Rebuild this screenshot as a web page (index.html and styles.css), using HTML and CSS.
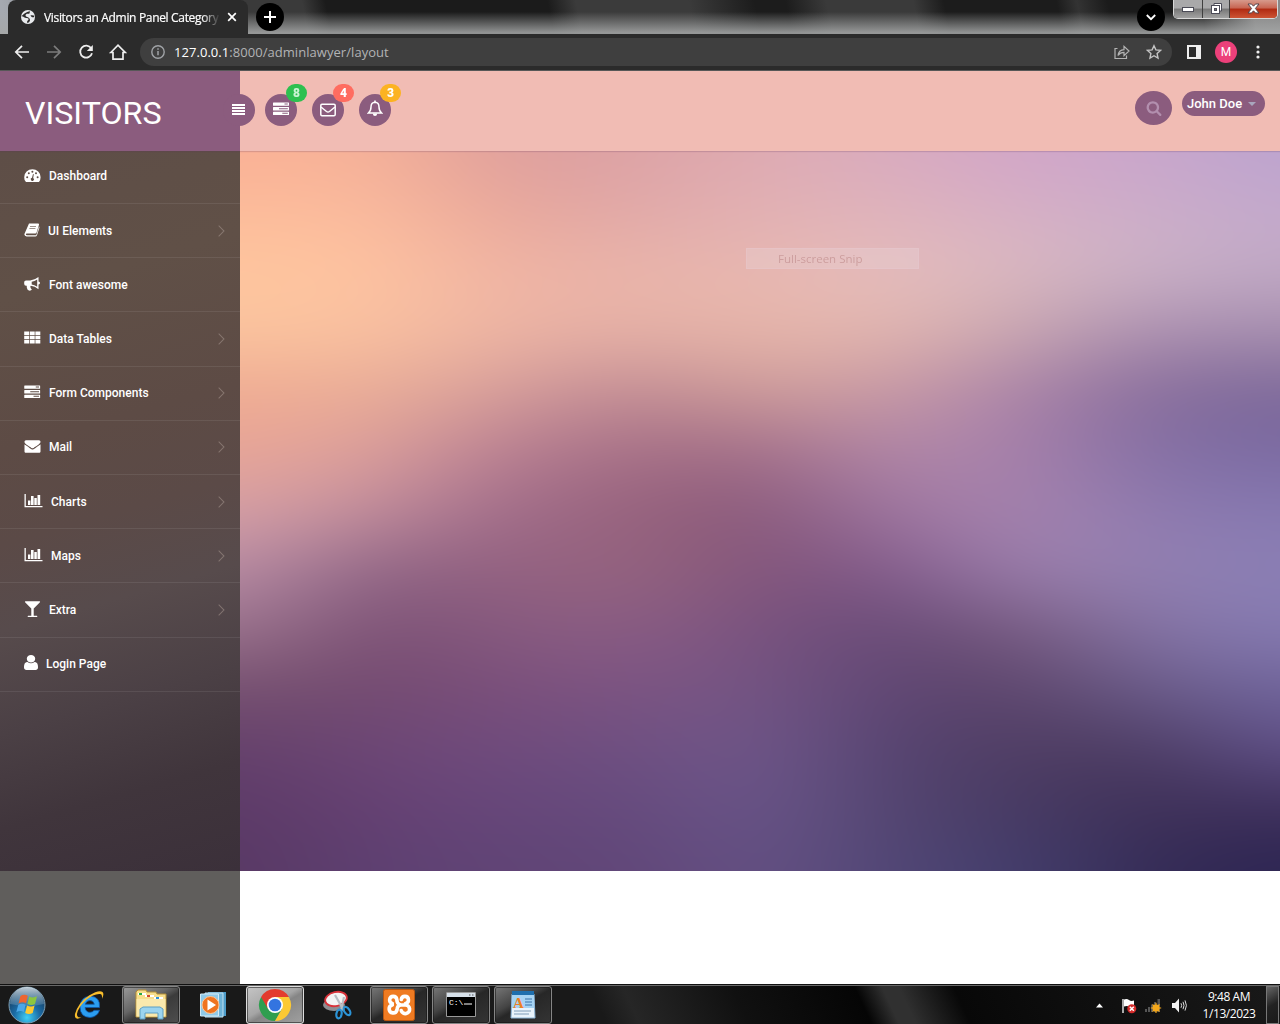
FILE: index.html
```html
<!DOCTYPE html>
<html lang="en">
<head>
<meta charset="utf-8">
<title>Visitors an Admin Panel Category</title>
<link rel="stylesheet" href="styles.css">
</head>
<body>
<svg class="defs" width="0" height="0">
  <symbol id="tasks" viewBox="0 0 16 16"><path fill-rule="evenodd" d="M.5 1.500h15q.5 0 .5.500v2.300q0 .5-.5.5H.5Q0 4.800 0 4.300V2q0-.5.500-.5zM11.500 2.600v1h3.300v-1zM.5 6.100h15q.5 0 .5.500v2.300q0 .5-.5.500H.5Q0 9.400 0 8.900V6.600q0-.5.500-.5zM6 7.200v1h8.800v-1zM.5 10.700h15q.5 0 .5.500v2.300q0 .5-.5.500H.5Q0 14 0 13.500v-2.300q0-.5.500-.5zM9.300 11.800v1h5.500v-1z"/></symbol>
  <symbol id="chart" viewBox="0 0 18 14"><path d="M0 0h1.300v12h16.700v1.300H0zM3.500 6.500h2.400V11H3.500zM6.500 2h2.600v9H6.500zM9.800 4h2.500v7H9.800zM13 1h2.700v10H13z"/></symbol>
</svg>

<header class="tabstrip">
  <div class="tab">
    <svg class="globe" viewBox="0 0 16 16"><circle cx="8" cy="8" r="7" fill="#e8eaed"/><path d="M1.500 7.300C4 7.500 4.500 9.200 6.500 9S9.300 10.300 8 11.300 7 13 7.500 14.300C9 13.500 9.800 12.500 10 11.300 10.200 9.500 8.500 8.300 6.500 7.700 4.500 6.500 6 4.500 8 4.800S9.500 3.500 10 2.200C8.500 2.200 6 3.500 4.500 4.500S2.500 6.300 1.500 7.300zM10.500 6.500C11.500 6 12.500 6.800 14 6.400L14.200 8C13 8.800 11.500 8.300 10.500 6.500z" fill="#2b2b2b"/></svg>
    <span class="tab-title">Visitors an Admin Panel Category</span>
    <svg class="tab-close" viewBox="0 0 10 10"><path d="M1.200 1.200l7.600 7.600M8.800 1.200L1.200 8.800" stroke="#fff" stroke-width="1.700"/></svg>
  </div>
  <div class="round new-tab"><svg width="14" height="14" viewBox="0 0 14 14"><path d="M7 1v12M1 7h12" stroke="#fff" stroke-width="2"/></svg></div>
  <div class="round tab-search"><svg width="10" height="10" viewBox="0 0 10 10"><path d="M.8 3L5 7.200 9.200 3" fill="none" stroke="#fff" stroke-width="1.800"/></svg></div>
  <div class="winctl">
    <span class="wmin"><svg width="12" height="6" viewBox="0 0 12 6"><rect x=".5" y=".5" width="11" height="4" fill="#fff" stroke="#4b4b57"/></svg></span>
    <span class="wmax"><svg width="13" height="13" viewBox="0 0 13 13"><path d="M4 1.500h7.500V9H4z" fill="#fff" stroke="#4b4b57"/><rect x="1.500" y="3.500" width="8" height="8" fill="#fff" stroke="#4b4b57"/><rect x="4.500" y="6.500" width="2" height="2" fill="#777" stroke="#4b4b57"/></svg></span>
    <span class="wclose"><svg width="13" height="11" viewBox="0 0 13 11"><path d="M1 1h3.500l2 2.200L8.500 1H12L8.400 5.500 12 10H8.500l-2-2.200L4.500 10H1l3.600-4.500z" fill="#fff" stroke="#54444c"/></svg></span>
  </div>
</header>

<div class="toolbar">
  <svg class="nav" viewBox="0 0 16 16"><path d="M15 8H2M8 1.800L1.800 8 8 14.200" fill="none" stroke="#eee" stroke-width="1.700"/></svg>
  <svg class="nav" viewBox="0 0 16 16"><path d="M1 8h13M8 1.800L14.200 8 8 14.200" fill="none" stroke="#7c7c7c" stroke-width="1.700"/></svg>
  <svg class="nav" viewBox="0 0 16 16"><path d="M13.200 4.300A6 6 0 1 0 14 9.300" fill="none" stroke="#eee" stroke-width="1.800"/><path d="M14.800 1v6H8.800z" fill="#eee"/></svg>
  <svg class="nav home" viewBox="0 0 18 18"><path d="M1.800 9.500L9 2.200l7.200 7.300H14v6.700H4V9.500z" fill="none" stroke="#eee" stroke-width="1.700"/></svg>
  <div class="address">
    <svg width="14" height="14" viewBox="0 0 14 14"><circle cx="7" cy="7" r="6.200" fill="none" stroke="#a0a3a7" stroke-width="1.400"/><path d="M7 6v4.300M7 3.300v1.500" stroke="#a0a3a7" stroke-width="1.500"/></svg>
    <span class="url"><b>127.0.0.1</b>:8000/adminlawyer/layout</span>
    <svg class="share" width="16" height="16" viewBox="0 0 16 16"><path d="M3.500 4.500H1v10h11.500v-3M4 11.500C4.500 7.500 6.500 5.800 10 5.600V2.300L15 7l-5 4.600V8.400C7.500 8.400 5.500 9.300 4 11.500z" fill="none" stroke="#b4b4b4" stroke-width="1.200"/></svg>
    <svg class="star" width="16" height="16" viewBox="0 0 16 16"><path d="M8 1.700l1.900 4.200 4.600.5-3.400 3.100.9 4.500L8 11.700 4 14l.9-4.500L1.500 6.400l4.600-.5z" fill="none" stroke="#c4c4c4" stroke-width="1.400"/></svg>
  </div>
  <svg class="panel" width="14" height="14" viewBox="0 0 14 14"><path d="M0 0h14v14H0z" fill="#eee"/><path d="M2 2h7v10H2z" fill="#2b2b2b"/></svg>
  <div class="avatar">M</div>
  <svg class="dots" width="4" height="14" viewBox="0 0 4 14" fill="#eee"><circle cx="2" cy="2" r="1.600"/><circle cx="2" cy="7" r="1.600"/><circle cx="2" cy="12" r="1.600"/></svg>
</div>

<main class="page">
  <div class="site-header">
    <div class="brand">VISITORS</div>
    <div class="toggle"><svg width="13" height="12" viewBox="0 0 13 12" fill="#fff"><path d="M0 0h13v2H0zM0 3h13v2H0zM0 6h13v2H0zM0 9h13v2H0z"/></svg></div>
    <div class="notices">
      <div class="notice"><svg class="lift" width="16" height="16" fill="#fff"><use href="#tasks"/></svg><i class="badge green">8</i></div>
      <div class="notice"><svg width="16" height="14" viewBox="0 0 16 14"><rect x=".8" y="1.200" width="14.400" height="11.600" rx="1.200" fill="none" stroke="#fff" stroke-width="1.500"/><path d="M1 4l5.500 4.500q1.500 1.100 3 0L15 4" fill="none" stroke="#fff" stroke-width="1.500"/></svg><i class="badge red">4</i></div>
      <div class="notice"><svg class="lift" width="16" height="17" viewBox="0 0 16 17"><path d="M8 2.200C4.800 2.300 4 4.800 4 7c0 3-1 4.700-2.600 6h13.200C13 11.700 12 10 12 7c0-2.200-.8-4.700-4-4.800z" fill="none" stroke="#fff" stroke-width="1.500"/><path d="M7.200.6h1.600v1.600H7.200zM5.800 13.500h4.400Q10 16 8 16t-2.200-2.500z" fill="#fff"/></svg><i class="badge amber">3</i></div>
    </div>
    <div class="search"><svg width="16" height="16" viewBox="0 0 1792 1792" fill="#b28fae"><path d="M1216 832q0-185-131.500-316.500t-316.500-131.500-316.500 131.500-131.500 316.500 131.500 316.500 316.500 131.500 316.500-131.500 131.500-316.500zm512 832q0 52-38 90t-90 38q-54 0-90-38l-343-342q-179 124-399 124-143 0-273.500-55.500t-225-150-150-225-55.500-273.500 55.500-273.500 150-225 225-150 273.500-55.500 273.500 55.500 225 150 150 225 55.500 273.500q0 220-124 399l343 343q37 37 37 90z"/></svg></div>
    <div class="user">John Doe<span class="caret"></span></div>
  </div>
  <div class="below">
    <nav class="sidebar">
      <ul class="menu">
        <li><svg width="17" height="14" viewBox="0 0 17 14"><path d="M2 13Q0 10.800.2 8.200A8.200 7.900 0 0 1 16.600 8.200Q16.600 11 15 13z"/><g fill="#5e4e46"><circle cx="3.200" cy="8.300" r="1"/><circle cx="4.800" cy="4.300" r="1"/><circle cx="8.400" cy="2.700" r="1"/><circle cx="12" cy="4.300" r="1"/><circle cx="13.600" cy="8.300" r="1"/><path d="M9 5l.8.200-.6 3.700a1.600 1.600 0 1 1-1.200-.2z"/></g></svg><span>Dashboard</span></li>
        <li class="sub"><svg width="16" height="14" viewBox="0 0 16 14"><path d="M5 .4h9.300q1 .3.700 1.400L12.600 9.600q-.3 1-1.300 1H2.800q-.9.200-.9.900.2.800 1.100.8h8.500q.7 0 1-.9L15 3.500q.6.600.4 1.300l-2.400 7.400q-.5 1.300-1.700 1.300H2.600Q.6 13.300.3 11.300z"/><path d="M6 3.500h6M5.400 5.500h6" stroke="#93877f" stroke-width=".9"/></svg><span>UI Elements</span></li>
        <li><svg width="17" height="14" viewBox="0 0 17 14"><path fill-rule="evenodd" d="M14.500 0v4.500q1.500.3 1.500 1.500t-1.500 1.500v4.700Q10.800 8.800 6.800 8.700q-1 1-.2 2 0 .8 1.300 1.800-.7 1.300-2.800 1.100-1.600-.4-1.700-1.300-1-2.300-.6-3.600H2Q.3 8.500.2 6.900V5Q.3 3.500 2 3.400h4.200Q10.500 3.300 14.500 0zM13.200 2.400Q10.400 4.300 7.700 4.700v2.800q2.700.3 5.500 2.300z"/></svg><span>Font awesome</span></li>
        <li class="sub"><svg width="17" height="14" viewBox="0 0 17 14"><path d="M.2.500h4.900v3.500H.2zM5.800.500h4.900v3.500H5.800zM11.400.500h4.900v3.500h-4.900zM.2 4.700h4.900v3.500H.2zM5.800 4.700h4.900v3.500H5.800zM11.400 4.700h4.900v3.500h-4.900zM.2 8.900h4.900v3.500H.2zM5.800 8.900h4.900v3.500H5.800zM11.400 8.900h4.900v3.500h-4.900z"/></svg><span>Data Tables</span></li>
        <li class="sub"><svg class="lift" width="17" height="16"><use href="#tasks" width="16.500" height="16"/></svg><span>Form Components</span></li>
        <li class="sub"><svg width="17" height="16" viewBox="0 0 1792 1792"><path d="M1792 710v794q0 66-47 113t-113 47h-1472q-66 0-113-47t-47-113v-794q44 49 101 87 362 246 497 345 57 42 92.500 65.500t94.500 48 110 24.500h2q51 0 110-24.500t94.500-48 92.500-65.500q170-123 498-345 57-39 100-87zm0-294q0 79-49 151t-122 123q-376 261-468 325-10 7-42.500 31t-54 38.500-52 32.500-57.500 27-50 9h-2q-23 0-50-9t-57.500-27-52-32.500-54-38.500-42.500-31q-91-64-262-182.500t-205-142.500q-62-42-117-115.500t-55-136.500q0-78 41.500-130t118.500-52h1472q65 0 112.500 47t47.500 113z"/></svg><span>Mail</span></li>
        <li class="sub"><svg width="19" height="14"><use href="#chart"/></svg><span>Charts</span></li>
        <li class="sub"><svg width="19" height="14"><use href="#chart"/></svg><span>Maps</span></li>
        <li class="sub"><svg class="lift" width="17" height="17" viewBox="0 0 1792 1792"><path d="M1699 186q0 35-43 78l-632 632v768h320q26 0 45 19t19 45-19 45-45 19h-896q-26 0-45-19t-19-45 19-45 45-19h320v-768l-632-632q-43-43-43-78 0-23 18-36.500t38-17.500 43-4h1408q23 0 43 4t38 17.500 18 36.500z"/></svg><span>Extra</span></li>
        <li><svg class="lift" width="14" height="15" viewBox="256 128 1280 1536" preserveAspectRatio="none"><path d="M1536 1399q0 109-62.500 187t-150.500 78h-854q-88 0-150.500-78t-62.500-187q0-85 8.500-160.500t31.500-152 58.500-131 94-89 134.500-34.500q131 128 313 128t313-128q76 0 134.500 34.500t94 89 58.500 131 31.500 152 8.500 160.500zm-256-887q0 159-112.500 271.500t-271.500 112.500-271.500-112.500-112.500-271.500 112.500-271.500 271.500-112.500 271.500 112.500 112.500 271.500z"/></svg><span>Login Page</span></li>
      </ul>
      <div class="sidebar-rest"></div>
    </nav>
    <section class="content">
      <canvas id="wallpaper" width="1040" height="720"></canvas>
      <div class="snip">Full-screen Snip</div>
    </section>
  </div>
</main>

<footer class="taskbar">
  <div class="start"><svg width="40" height="38" viewBox="0 0 40 38">
    <defs><radialGradient id="orb" cx=".5" cy=".85" r=".8"><stop offset="0" stop-color="#3fd0f5"/><stop offset=".45" stop-color="#1b6ca6"/><stop offset="1" stop-color="#16324f"/></radialGradient><linearGradient id="gloss" x2="0" y2="1"><stop offset="0" stop-color="#e3edf3" stop-opacity=".85"/><stop offset="1" stop-color="#8fb4cc" stop-opacity=".25"/></linearGradient></defs>
    <circle cx="20" cy="19" r="18" fill="url(#orb)" stroke="#7f9fb4" stroke-width="1"/><path d="M3 18A17 17 0 0 1 37 18Q20 22 3 18z" fill="url(#gloss)"/>
    <path d="M13.500 10Q17 7.500 20.800 9.700L19 17.200Q15.500 15.300 11.500 17.500z" fill="#ee6530"/><path d="M22.200 10.500Q26 12.500 30 10.300L28 18Q24.500 20 20.400 18z" fill="#8cc63f"/><path d="M11.200 19Q14.500 16.800 18.600 18.800L16.800 26Q13 24 9.300 26.300z" fill="#4aa7e8"/><path d="M20 19.600Q24 21.500 27.600 19.500L25.700 27Q22 29 18.200 27z" fill="#fdc930"/></svg></div>
  <div class="task"><svg width="36" height="34" viewBox="0 0 36 34"><path d="M28.500 19.500H14Q15 24.500 19 24.300q3 0 4-2h5.500Q26.500 29 19 29.500 9 29 9 19T19 8.200q10.500.3 9.500 11.300zM14.300 16.200h9Q22.500 12.500 19 12.500t-4.700 3.700z" fill="#2b9df0" stroke="#0e56a8" stroke-width=".8"/><path d="M10.500 29.500Q3 33 4 26 7 15 18 7.500 28 1.500 31.500 4q2 2-.5 7 .5-5-2-5Q23 5.500 15 12 7 19.500 6 26q-.3 4 4.500 3.500z" fill="#f8bd2c"/></svg></div>
  <div class="task open lit"><svg width="34" height="32" viewBox="0 0 34 32"><path d="M2 3l2-2h8l1 2h9l1 2h9v23H2z" fill="#f7de8c" stroke="#b48f38"/><path d="M4 4h8v2H4z" fill="#fff"/><path d="M5 4h3v2H5z" fill="#27a844"/><path d="M11 6h9v2h-9z" fill="#fff"/><path d="M13 6h3v2h-3z" fill="#d34a33"/><path d="M20 8h9v2h-9z" fill="#fff"/><path d="M22 8h3v2h-3z" fill="#2e91d8"/><path d="M2.500 10h29v17.500h-29z" fill="#fae9ad"/><path d="M6 30V20l3-2h17l3 2v10h-5v-6H11v6z" fill="#9bd4ef" stroke="#5c9fc4"/></svg></div>
  <div class="task"><svg width="28" height="28" viewBox="0 0 28 28"><path d="M9 1h18v24H9z" fill="#4e9cc8"/><path d="M6 2h18v24H6z" fill="#6eb3d8" stroke="#c2e1f1"/><path d="M1.500 3h18v22h-18z" fill="#8ec9e8" stroke="#d2eaf5"/><circle cx="11.500" cy="14" r="8.500" fill="#ef7420" stroke="#fbc79a"/><path d="M8.500 8.500l8.500 5.500-8.500 5.500z" fill="#fff"/></svg></div>
  <div class="task open bright"><svg width="34" height="34" viewBox="0 0 34 34"><path d="M17 17L3.140 9A16 16 0 0 0 17 33L23.930 21z" fill="#2f9e4f"/><path d="M17 9H30.860A16 16 0 0 1 17 33L23.930 21z" fill="#fcc934"/><path d="M3.140 9A16 16 0 0 1 30.860 9H17L10.070 21z" fill="#e33b2e"/><circle cx="17" cy="17" r="8" fill="#fff"/><circle cx="17" cy="17" r="6.300" fill="#3374e0"/></svg></div>
  <div class="task"><svg width="34" height="34" viewBox="0 0 34 34"><ellipse cx="14" cy="17" rx="11" ry="6" fill="#8e8e92"/><ellipse cx="16" cy="11" rx="11" ry="7" fill="#f4f4f4" stroke="#d8323a" stroke-width="1.800" transform="rotate(-12 16 11)"/><path d="M15 7l9 16M24 9l-3 14" stroke="#b9bec4" stroke-width="2.200"/><ellipse cx="19" cy="26" rx="2.600" ry="4.400" transform="rotate(10 19 26)" fill="none" stroke="#2b93d6" stroke-width="2.200"/><ellipse cx="27" cy="23" rx="2.600" ry="4.600" transform="rotate(-35 27 23)" fill="none" stroke="#2b93d6" stroke-width="2.200"/></svg></div>
  <div class="task open"><svg width="32" height="32" viewBox="0 0 32 32"><rect x=".5" y=".5" width="31" height="31" rx="2" fill="#ef7b22" stroke="#b9560f"/><path d="M13.800 10.500A3.600 3.600 0 1 0 9.300 14.500M9.300 16A4 4 0 1 0 14 21Q14 16.500 18 16H22A4.300 4.300 0 1 1 18.200 21.500M18.300 10.500A3.600 3.600 0 1 1 22.500 14.500M13.800 10.500Q14 14.500 16.500 15.500" fill="none" stroke="#fff" stroke-width="3.600" stroke-linecap="round" stroke-linejoin="round"/></svg></div>
  <div class="task open"><svg width="30" height="26" viewBox="0 0 30 26"><path d="M.5.500h29v24H.5z" fill="#000" stroke="#999"/><path d="M1 1h28v4H1z" fill="#d6e0ea"/><path d="M23 3h1.500M26 3h1.500" stroke="#555"/><text x="3" y="12.500" class="prompt">C:\</text><path d="M18 12h8" stroke="#fff"/></svg></div>
  <div class="task open"><svg width="26" height="30" viewBox="0 0 26 30"><path d="M2 4h22l1 24H1z" fill="#e9f3fb" stroke="#8db6d8"/><path d="M2 1h22v4H2z" fill="#1f6fae"/><path d="M2 5h22v13H2z" fill="#a6d3f3"/><text x="3" y="18" class="pad-a">A</text><path d="M15 9h7M15 12h7M15 15h7" stroke="#3a72a8"/><path d="M4 21h17M4 24h15" stroke="#7f9cb8"/></svg></div>
  <div class="tray">
    <svg width="9" height="5" viewBox="0 0 9 5"><path d="M1 4.500h7L4.500.5z" fill="#fff"/></svg>
    <svg width="16" height="16" viewBox="0 0 16 16"><path d="M2 1v14" stroke="#fff" stroke-width="1.300"/><path d="M3 1.500q3-1 5 .5t5 .5v7q-3 .5-5-.8T3 8.500z" fill="#fff"/><circle cx="10.800" cy="10.800" r="4.500" fill="#d42a2a"/><path d="M8.800 8.800l4 4M12.800 8.800l-4 4" stroke="#fff" stroke-width="1.500"/></svg>
    <svg width="17" height="15" viewBox="0 0 17 15"><path d="M0 11h2v3H0zM3 9h2v5H3zM6 6.500h2V14H6zM9 4h2v10H9zM12.500 1h2.500v13h-2.500z" fill="#555"/><circle cx="11" cy="10" r="3.600" fill="#f5a81c"/><path d="M11 4.800v10.400M5.800 10h10.400M7.500 6.500l7 7M14.500 6.500l-7 7" stroke="#f5a81c" stroke-width="1.200"/></svg>
    <svg width="16" height="15" viewBox="0 0 16 15"><path d="M1 5h3l4-4.500v14L4 10H1z" fill="#f2f2f2"/><path d="M10 5.200q1.300 2.300 0 4.600M12 3.800q2 3.700 0 7.400M14 2.400q2.800 5.100 0 10.200" fill="none" stroke="#ddd"/></svg>
  </div>
  <div class="clock"><span class="time">9:48 AM</span><span class="date">1/13/2023</span></div>
  <div class="peek"></div>
</footer>
<script src="wallpaper.js"></script>
</body>
</html>
```
FILE: styles.css
```css
* { box-sizing: border-box; }
body { margin: 0; width: 1280px; height: 1024px; overflow: hidden; display: flex; flex-direction: column; font-family: Roboto, sans-serif; background: #fff; }
svg { display: block; flex: none; }
.defs { position: absolute; }

/* Browser window */
.tabstrip { height: 34px; flex: none; display: flex; padding-left: 8px; position: relative;
  background: linear-gradient(180deg, transparent 0 35%, rgba(165,167,167,.85) 95%), linear-gradient(78deg, #a5a9b0 0 8px, #3a3a3a 240px 302px, #1b1b1b 325px 542px, #3b3b3b 570px 680px, #1c1c1c 745px 775px, #3a3a3a 815px 900px, #1c1c1c 930px 1040px, #333 1060px, #1b1b1b 1090px 1180px, #888 1230px); }
.tab { width: 240px; height: 34px; background: #2b2b2b; border-radius: 8px 8px 0 0; display: flex; align-items: center; padding-left: 12px; }
.globe { width: 16px; height: 16px; }
.tab-title { margin-left: 8px; width: 176px; white-space: nowrap; overflow: hidden; color: #fff; font: 12px "Open Sans", sans-serif; letter-spacing: -.33px; -webkit-text-stroke: .2px #fff; -webkit-mask-image: linear-gradient(90deg, #000 158px, transparent 176px); }
.tab-close { width: 10px; height: 10px; margin-left: 7px; }
.round { width: 28px; height: 28px; margin-top: 3px; border-radius: 50%; background: #000; display: flex; align-items: center; justify-content: center; flex: none; }
.new-tab { margin-left: 8px; }
.tab-search { margin-left: auto; }
.winctl { width: 105px; height: 19px; margin: 0 2px 0 8px; display: flex; border: 1px solid #d8d8d8; border-top: 0; border-radius: 0 0 5px 5px; overflow: hidden; box-shadow: inset 0 0 0 1px #3b3b3b; }
.winctl span { display: flex; align-items: center; justify-content: center; padding-bottom: 2px; background: linear-gradient(#a9a9aa 0 45%, #777 50%, #a2a2a2); border-right: 1px solid #3f3f3f; }
.winctl .wmin { width: 29px; padding-top: 4px; }
.winctl .wmax { width: 27px; }
.winctl .wclose { flex: 1; border: 0; background: linear-gradient(#d79a8c 0, #c76451 45%, #b02a12 50%, #cd5434); }

.toolbar { height: 37px; flex: none; background: #2b2b2b; border-bottom: 1px solid #575757; display: flex; align-items: center; padding: 0 20px 0 14px; }
.nav { width: 16px; height: 16px; margin-right: 16px; }
.home { width: 18px; height: 18px; margin: 0 13px 0 -1px; }
.address { width: 1032px; height: 28px; border-radius: 14px; background: #3f3f3f; display: flex; align-items: center; padding: 0 10px 0 11px; }
.url { margin-left: 9px; color: #b2b3b5; font: 13px "Open Sans", sans-serif; letter-spacing: .05px; white-space: nowrap; }
.url b { font-weight: 400; color: #fff; }
.share { margin-left: auto; }
.star { margin-left: 16px; }
.panel { margin-left: 15px; }
.avatar { width: 22px; height: 22px; margin-left: 14px; border-radius: 50%; background: #ec407a; color: #fff; font-size: 12px; line-height: 22px; text-align: center; }
.dots { margin-left: 19px; }

/* Admin page */
.page { height: 913px; flex: none; display: flex; flex-direction: column; }
.site-header { height: 80px; flex: none; display: flex; background: #f1bcb4; box-shadow: 0 1px 1px rgba(90,50,90,.2); position: relative; z-index: 1; }
.brand { width: 240px; height: 80px; flex: none; padding-left: 25px; background: #8b5c7e; color: #fff; font-size: 32.200px; line-height: 84px; }
.toggle { width: 32px; height: 32px; margin: 23px 0 0 -17px; padding: 10px 0 0 9px; border-radius: 50%; background: #8b5c7e; flex: none; }
.notices { display: flex; gap: 15px; margin: 23px 0 0 10px; }
.notice { width: 32px; height: 32px; border-radius: 50%; background: #8b5c7e; display: flex; align-items: center; justify-content: center; position: relative; }
.notice .lift { margin-top: -3px; }
.badge { position: absolute; top: -10px; left: 21px; width: 21px; height: 18px; border-radius: 9px; color: #fff; font: 900 12px/18px Roboto, sans-serif; text-align: center; }
.green { background: #2dc050; color: #c9f3d3; }
.red { background: #ff6c60; }
.amber { background: #fcb322; }
.search { width: 37px; height: 34px; margin: 20px 0 0 auto; border-radius: 50%; background: #8b5c7e; display: flex; align-items: center; justify-content: center; }
.user { width: 83px; height: 25px; margin: 20px 15px 0 10px; padding-left: 5px; border-radius: 13px; background: #8b5c7e; color: #fff; font-size: 13px; font-weight: 500; line-height: 25px; display: flex; align-items: center; white-space: nowrap; }
.caret { margin-left: 6px; border: 4px solid transparent; border-top-color: #a9a6bd; border-bottom: 0; }
.below { flex: 1; display: flex; }
.sidebar { width: 240px; display: flex; flex-direction: column; flex: none; }
.menu { height: 720px; flex: none; margin: 0; padding: 0; list-style: none; background: linear-gradient(164deg, #5e4e47 0, #605047 19%, #5d4b45 38%, #5b4a47 50%, #574b4c 61%, #4b4045 74%, #40353c 86%, #3b303a 100%); }
.menu li { height: 54.200px; padding: 0 14px 0 24px; border-bottom: 1px solid rgba(255,255,255,.08); display: flex; align-items: center; color: #fff; font-size: 12px; font-weight: 500; }
.menu li:first-child { height: 53px; padding-bottom: 3px; }
.menu li > svg { fill: #fff; margin: -2px 8px 0 0; }
.menu li:first-child > svg { margin-top: 0; }
.menu .lift { margin-top: -3px; }
.menu .sub::after { content: ""; width: 7px; height: 7px; margin: 0 3px 0 auto; border: solid rgba(160,145,138,.6); border-width: 1px 1px 0 0; transform: rotate(45deg); }
.sidebar-rest { flex: 1; background: #605e5c; }
.content { flex: 1; position: relative; }
#wallpaper { display: block; }
.snip { position: absolute; left: 506px; top: 97px; width: 173px; height: 21px; padding-left: 31px; background: rgba(235,215,220,.33); border: 1px solid rgba(235,205,215,.25); color: #cd9e9e; font: 11.500px/19px "Open Sans", sans-serif; white-space: nowrap; }

/* Desktop taskbar */
.taskbar { height: 40px; flex: none; display: flex; align-items: center; background: linear-gradient(65deg, #191919 0 550px, #262626 580px, #101010 680px, #050505 790px, #303030 815px 830px, #080808 880px, #191919); border-top: 1px solid #111; box-shadow: inset 0 1px #686868; }
.start { width: 58px; padding-left: 7px; }
.task { width: 58px; height: 38px; margin: 1px 0 0 4px; display: flex; align-items: center; justify-content: center; flex: none; }
.start + .task { margin-left: 2px; }
.open { border: 1px solid #858585; border-radius: 3px; background: linear-gradient(150deg, #777 0, #444 38%, #272727 50%, #343434); box-shadow: inset 0 0 0 1px #1118; }
.lit { background: linear-gradient(150deg, #999 0, #666 40%, #3b3b3b 55%, #4e4e4e); }
.bright { background: linear-gradient(150deg, #c5c5c5 0, #a5a5a5 45%, #858585 55%, #a0a0a0); border-color: #ddd; }
.prompt { fill: #fff; font: 8px "Liberation Mono", monospace; }
.pad-a { fill: #ee8123; font: bold 15px "Liberation Serif", serif; }
.tray { margin-left: auto; display: flex; align-items: center; gap: 9px; padding-top: 2px; }
.tray svg:first-child { margin-right: 8px; }
.tray svg:nth-child(3) { margin-left: -1px; }
.clock { width: 54px; margin: 0 10px 0 15px; color: #fff; font: 12px/17px "Open Sans", sans-serif; letter-spacing: -.450px; text-align: center; display: flex; flex-direction: column; white-space: nowrap; }
.peek { width: 13px; height: 38px; margin: 1px 1px 0 0; border: 1px solid #777; background: linear-gradient(150deg, #666, #222 50%, #1a1a1a); }
```
FILE: wallpaper.js
```js
// Colour mesh of the backdrop: 9 columns by 13 rows, interpolated over the canvas.
const mesh = [
  'fab095 f6b298 de9e9c dca2a5 dfabb2 d8abbf d2a5c8 c9a6cb bba3cf',
  'fcbc9a fbbb9e e9a799 e0a8a8 e2b1b3 dfb3bb d6afc5 ccadc9 c3a9cc',
  'ffc69e fec3a0 f0b3a3 e9b4aa e8b7b0 e5bdbd d9b7bf cab1c6 bfa8c4',
  'fac49e fac1a0 edb4a3 e5b0a6 e6b5a9 e2b6af c9a7b1 ab8fb0 a68eae',
  'f0ab92 eaae97 d79e9b c08b94 cf9d99 c99aa5 aa83a8 886d9b 7c6899',
  'e8a596 dda09c b87f92 a56f86 a26e88 b288a8 a67faa 8470a5 7a6aa2',
  'd6a0a6 c18d9c a06c8a 97627c 89597b 9e76a0 a784ae 8e79ae 8679b1',
  'b88ca4 8e6585 936080 96657f 82547a 815a8a 9c7fac 9380b1 8a7fb5',
  '9a738c 7b5074 865a7f 8a5c84 78527f 674a76 775a7e 8473a4 857ab1',
  '744f6e 734a70 7a4e7b 7c5482 735584 5e4572 5c456b 6a5b88 6f649b',
  '64406b 6c4676 6f4b7d 6d4f81 70578a 544370 4f3d62 4b3b62 5f4f87',
  '5c3a67 654072 66467a 654a7c 695589 534570 463a63 3e3057 3c2e59',
  '583863 5d4072 604475 604678 655184 504675 433e6d 342b55 2c2553'
].map(row => row.split(' ').map(hex => [0, 2, 4].map(i => parseInt(hex.slice(i, i + 2), 16))));

const canvas = document.getElementById('wallpaper');
const ctx = canvas.getContext('2d');
const { width, height } = canvas;
const image = ctx.createImageData(width, height);
const at = (x, y, c) => mesh[Math.max(0, Math.min(12, y))][Math.max(0, Math.min(8, x))][c];
// Uniform cubic B-spline weights keep the blend free of visible cell edges.
const spline = (a, b, c, d, t) => {
  const s = 1 - t;
  return (s * s * s * a + (3 * t * t * t - 6 * t * t + 4) * b + (3 * s * s * s - 6 * s * s + 4) * c + t * t * t * d) / 6;
};

for (let y = 0, p = 0; y < height; y++) {
  const gy = y / height * 12, iy = Math.floor(gy), ty = gy - iy;
  const row = [];
  for (let x = -1; x <= 10; x++) {
    row.push([0, 1, 2].map(c => spline(at(x, iy - 1, c), at(x, iy, c), at(x, iy + 1, c), at(x, iy + 2, c), ty)));
  }
  for (let x = 0; x < width; x++) {
    const gx = x / width * 8, ix = Math.floor(gx), tx = gx - ix;
    for (let c = 0; c < 3; c++) {
      image.data[p++] = spline(row[ix][c], row[ix + 1][c], row[ix + 2][c], row[ix + 3][c], tx);
    }
    image.data[p++] = 255;
  }
}
ctx.putImageData(image, 0, 0);
```
